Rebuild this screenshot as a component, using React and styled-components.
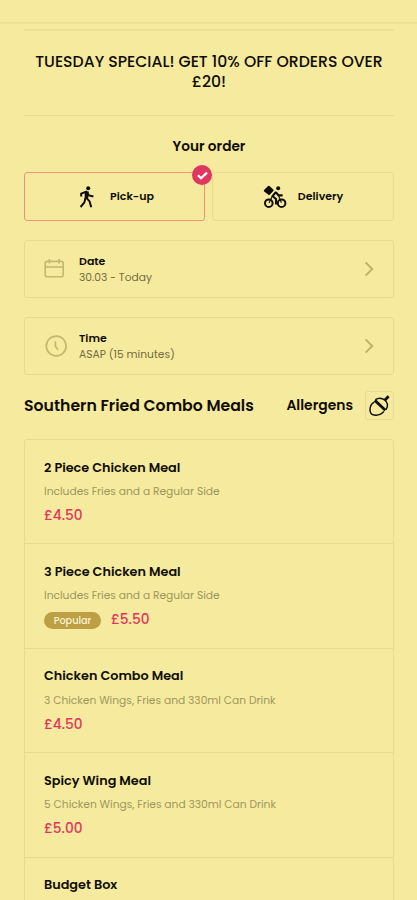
import styled, { createGlobalStyle } from "styled-components";

const meals = [
  {
    name: "2 Piece Chicken Meal",
    info: "Includes Fries and a Regular Side",
    price: "£4.50",
  },
  {
    name: "3 Piece Chicken Meal",
    info: "Includes Fries and a Regular Side",
    price: "£5.50",
    popular: true,
  },
  {
    name: "Chicken Combo Meal",
    info: "3 Chicken Wings, Fries and 330ml Can Drink",
    price: "£4.50",
  },
  {
    name: "Spicy Wing Meal",
    info: "5 Chicken Wings, Fries and 330ml Can Drink",
    price: "£5.00",
  },
  {
    name: "Budget Box",
  },
];

const WalkIcon = () => (
  <svg width="16" height="22" viewBox="0 0 16 22" fill="none" stroke="#0f0d05" strokeWidth="2">
    <circle cx="9.2" cy="2.2" r="2" fill="#0f0d05" stroke="none" />
    <path d="M2.2 10.6V7.6L7.2 5.6 10 9.4 14.4 10.4" />
    <path d="M5.6 5.2 9.8 5.4 9.2 12 5.8 12.6Z" fill="#0f0d05" stroke="none" />
    <path d="M6.6 11.4 5.4 16.4 1.6 21M7 11.4l3.6 4 1.6 5.8" />
  </svg>
);

const CourierIcon = () => (
  <svg width="24" height="24" viewBox="0 0 24 24" fill="none" stroke="#0f0d05">
    <path
      d="M5.8 1.8 9.6 5.2 6 9 1.8 5.8Z"
      fill="#0f0d05"
      strokeWidth="2"
      strokeLinejoin="round"
    />
    <circle cx="15.2" cy="3.2" r="2" fill="#0f0d05" stroke="none" />
    <circle cx="5.8" cy="18.2" r="3.8" strokeWidth="2" />
    <circle cx="18.6" cy="18.2" r="3.8" strokeWidth="2" />
    <path d="m13 6.8-3.4 4.4 3.4 2.8v5.4M12.8 7.2l2.8 3.2h4" strokeWidth="2.1" />
    <path d="m15.6 10.8 2.8 7M9 11.8 6 18" strokeWidth="1.1" />
  </svg>
);

const CalendarIcon = () => (
  <svg width="21" height="21" viewBox="0 0 21 21" fill="none" stroke="#c4b76e" strokeWidth="1.6">
    <rect x="1.2" y="2.4" width="18" height="15.4" rx="2" />
    <path d="M1.2 8h18M5.4 0v4.6M15 0v4.6" />
  </svg>
);

const ClockIcon = () => (
  <svg width="24" height="24" viewBox="0 0 24 24" fill="none" stroke="#c4b76e" strokeWidth="1.7">
    <circle cx="12.2" cy="12" r="9.9" />
    <path d="M11.4 7.2v5l2.6 3.6" />
  </svg>
);

const ArrowIcon = () => (
  <svg width="10" height="16" viewBox="0 0 10 16" fill="none" stroke="#bfb064" strokeWidth="1.9">
    <path d="m1.6 1.4 6.6 6.6-6.6 6.6" />
  </svg>
);

const NutIcon = () => (
  <svg width="22" height="22" viewBox="0 0 22 22" fill="none" stroke="#0f0d05" strokeWidth="1.5">
    <path d="M5.2 7.2C2 9 .9 12 1 15.2c.2 2.800 1.800 4.600 4.200 4.900 3.800.4 7.600-.8 9.600-3.700" />
    <path d="M6.400 4.600c2.800-1.800 6.400-1.800 9.200.2 3 2.200 4 6.200 1.400 9.800" />
    <path d="M5.800 5.400 16.400 15.200" strokeWidth="2.800" />
    <path d="M16 5 19.600 1.200" strokeWidth="2.800" />
  </svg>
);

const App = () => {
  return (
    <>
      <GlobalStyle />
      <TopBar />
      <Page>
        <Notice>
          TUESDAY SPECIAL! GET 10% OFF ORDERS OVER
          <span>£20!</span>
        </Notice>
        <OrderTitle>Your order</OrderTitle>
        <Methods>
          <Method $active>
            <WalkIcon />
            Pick-up
            <Check>
              <svg width="11" height="9" viewBox="0 0 11 9" fill="none" stroke="#fff" strokeWidth="2.2">
                <path d="m1 4.2 3 3 6-5.6" />
              </svg>
            </Check>
          </Method>
          <Method>
            <CourierIcon />
            Delivery
          </Method>
        </Methods>
        <Option>
          <OptionIcon>
            <CalendarIcon />
          </OptionIcon>
          <OptionText>
            <h4>Date</h4>
            <p>30.03 - Today</p>
          </OptionText>
          <ArrowIcon />
        </Option>
        <Option>
          <OptionIcon>
            <ClockIcon />
          </OptionIcon>
          <OptionText>
            <h4>Time</h4>
            <p>ASAP (15 minutes)</p>
          </OptionText>
          <ArrowIcon />
        </Option>
        <SectionHead>
          <h2>Southern Fried Combo Meals</h2>
          <h3>Allergens</h3>
          <NutButton>
            <NutIcon />
          </NutButton>
        </SectionHead>
        <Menu>
          {meals.map((meal) => (
            <Meal key={meal.name}>
              <h3>{meal.name}</h3>
              {meal.info && <p>{meal.info}</p>}
              {meal.price && (
                <PriceRow>
                  {meal.popular && <Badge>Popular</Badge>}
                  <Price>{meal.price}</Price>
                </PriceRow>
              )}
            </Meal>
          ))}
        </Menu>
      </Page>
    </>
  );
};

const GlobalStyle = createGlobalStyle`
  * {
    margin: 0;
    padding: 0;
    box-sizing: border-box;
  }
  body {
    background: #f6ea9e;
    color: #0f0d05;
    font-family: Poppins, Inter, sans-serif;
  }
  svg {
    display: block;
    flex: none;
  }
`;

const TopBar = styled.header`
  height: 24px;
  border-bottom: 2px solid #efe193;
`;

const Page = styled.main`
  height: 876px;
  padding: 5px 23px 0 24px;
  overflow: hidden;
`;

const Notice = styled.div`
  height: 87px;
  padding-top: 21px;
  border-top: 2px solid #ede091;
  border-bottom: 1px solid #e8da8c;
  font-size: 15.7px;
  font-weight: 500;
  line-height: 19.5px;
  text-align: center;
  white-space: nowrap;
  span {
    display: block;
  }
`;

const OrderTitle = styled.h2`
  padding-top: 21px;
  font-size: 13.7px;
  font-weight: 600;
  line-height: 20px;
  text-align: center;
`;

const Methods = styled.div`
  display: grid;
  grid-template-columns: 181px 182px;
  justify-content: space-between;
  margin-top: 15px;
`;

const Method = styled.button`
  position: relative;
  display: flex;
  align-items: center;
  justify-content: center;
  gap: ${({ $active }) => ($active ? "15px" : "11px")};
  height: 49px;
  padding-left: ${({ $active }) => ($active ? "4px" : "0")};
  border: ${({ $active }) => ($active ? "1px solid #f09478" : "1px solid #eadc8f")};
  border-radius: 3px;
  background: none;
  color: inherit;
  font: 600 11px Poppins, Inter, sans-serif;
`;

const Check = styled.span`
  position: absolute;
  top: -8px;
  right: -8px;
  display: flex;
  align-items: center;
  justify-content: center;
  width: 20px;
  height: 20px;
  border-radius: 50%;
  background: #e13660;
`;

const Option = styled.div`
  display: flex;
  align-items: center;
  height: 58px;
  margin-top: 19px;
  padding: 0 19px;
  border: 1px solid #e8da8c;
  border-radius: 3px;
`;

const OptionIcon = styled.div`
  width: 35px;
`;

const OptionText = styled.div`
  flex: 1;
  padding-top: 1px;
  line-height: 16.5px;
  h4 {
    font-size: 11px;
    font-weight: 600;
  }
  p {
    color: #746c40;
    font-size: 10.7px;
  }
`;

const SectionHead = styled.div`
  display: flex;
  align-items: center;
  height: 29px;
  margin-top: 16px;
  white-space: nowrap;
  h2,
  h3 {
    padding-bottom: 1px;
    font-weight: 600;
  }
  h2 {
    flex: 1;
    font-size: 15.7px;
  }
  h3 {
    font-size: 13.9px;
  }
`;

const NutButton = styled.div`
  display: flex;
  align-items: center;
  justify-content: center;
  width: 29px;
  height: 29px;
  margin-left: 12px;
  border: 1px solid #eadc8f;
  border-radius: 3px;
`;

const Menu = styled.div`
  margin-top: 19px;
  border: 1px solid #e8da8c;
  border-radius: 3px;
`;

const Meal = styled.div`
  height: 104.4px;
  padding: 18.5px 19px 0;
  border-bottom: 1px solid #e8da8c;
  h3 {
    font-size: 12.8px;
    font-weight: 600;
    line-height: 18px;
  }
  p {
    margin-top: 7.5px;
    color: #a0965d;
    font-size: 10.7px;
    line-height: 16px;
  }
`;

const PriceRow = styled.div`
  display: flex;
  align-items: center;
  gap: 10px;
  height: 18px;
  margin-top: 7px;
`;

const Badge = styled.span`
  width: 57px;
  border-radius: 9px;
  background: #bda045;
  color: #fbf3cf;
  font-size: 9.7px;
  font-weight: 500;
  line-height: 17px;
  text-align: center;
`;

const Price = styled.span`
  color: #e13660;
  font-size: 13.7px;
  font-weight: 500;
`;

export default App;
